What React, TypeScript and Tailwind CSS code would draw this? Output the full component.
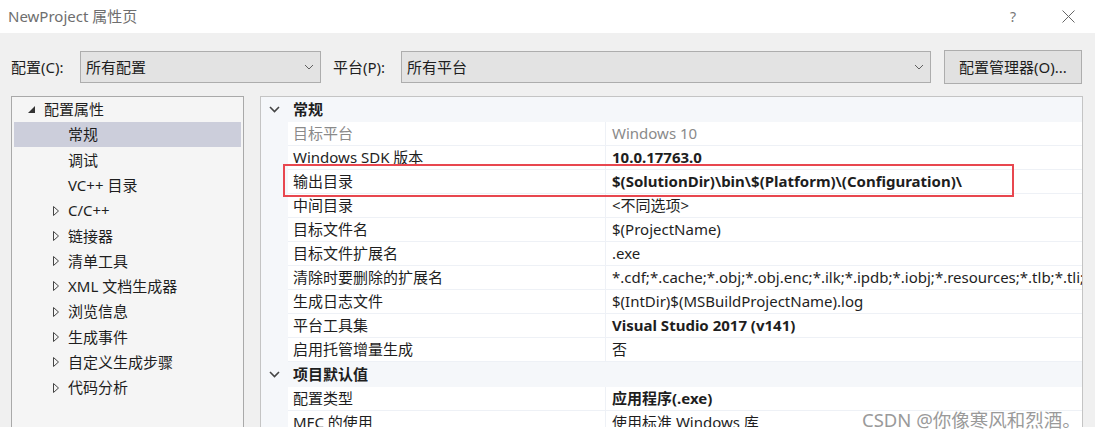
import type { ReactNode } from "react"

type Prop = { name: string; value: string; bold?: boolean; dim?: boolean }

const general: Prop[] = [
  { name: "目标平台", value: "Windows 10", dim: true },
  { name: "Windows SDK 版本", value: "10.0.17763.0", bold: true },
  { name: "输出目录", value: "$(SolutionDir)\\bin\\$(Platform)\\(Configuration)\\", bold: true },
  { name: "中间目录", value: "<不同选项>" },
  { name: "目标文件名", value: "$(ProjectName)" },
  { name: "目标文件扩展名", value: ".exe" },
  {
    name: "清除时要删除的扩展名",
    value:
      "*.cdf;*.cache;*.obj;*.obj.enc;*.ilk;*.ipdb;*.iobj;*.resources;*.tlb;*.tli;*.tlh;*.tmp;*.rsp;*.pgc;*.pgd;*.meta;*.tlog;*.manifest;*.res;*.pch;*.exp",
  },
  { name: "生成日志文件", value: "$(IntDir)$(MSBuildProjectName).log" },
  { name: "平台工具集", value: "Visual Studio 2017 (v141)", bold: true },
  { name: "启用托管增量生成", value: "否" },
]

const defaults: Prop[] = [
  { name: "配置类型", value: "应用程序(.exe)", bold: true },
  { name: "MFC 的使用", value: "使用标准 Windows 库" },
]

const treeItems = [
  { label: "常规", selected: true },
  { label: "调试" },
  { label: "VC++ 目录" },
  { label: "C/C++", expander: true },
  { label: "链接器", expander: true },
  { label: "清单工具", expander: true },
  { label: "XML 文档生成器", expander: true },
  { label: "浏览信息", expander: true },
  { label: "生成事件", expander: true },
  { label: "自定义生成步骤", expander: true },
  { label: "代码分析", expander: true },
]

const Chevron = ({ className }: { className?: string }) => (
  <svg width="10" height="6" viewBox="0 0 10 6" className={className}>
    <path d="M1 1 L5 5 L9 1" fill="none" stroke="currentColor" strokeWidth="1" />
  </svg>
)

const Dropdown = ({ text, width }: { text: string; width: string }) => (
  <div className={`${width} h-[32px] flex items-center justify-between border border-[#adadad] bg-[#e3e3e3] pl-[5px] pr-[6px]`}>
    <span>{text}</span>
    <Chevron className="text-[#606060]" />
  </div>
)

const Category = ({ children }: { children: ReactNode }) => (
  <div className="flex h-[25px] items-center bg-[#f5f7fa]">
    <div className="w-[27px] flex justify-center">
      <svg width="11" height="7" viewBox="0 0 11 7">
        <path d="M1 1 L5.5 5.5 L10 1" fill="none" stroke="#444" strokeWidth="1.6" />
      </svg>
    </div>
    <span className="pl-[5px] font-bold">{children}</span>
  </div>
)

const Row = ({ p }: { p: Prop }) => (
  <div className="flex h-[24px]">
    <div className="w-[27px] shrink-0 bg-[#f5f7fa]" />
    <div className={`w-[317px] shrink-0 flex items-center pl-[5px] bg-white border-b border-[#eef1f6] ${p.dim ? "text-[#8a8a8a]" : ""}`}>
      {p.name}
    </div>
    <div
      className={`flex-1 flex items-center pl-[6px] bg-white border-b border-l border-[#eef1f6] whitespace-nowrap overflow-hidden ${
        p.bold ? "font-bold" : ""
      } ${p.dim ? "text-[#8a8a8a]" : ""}`}
    >
      {p.value}
    </div>
  </div>
)

const App = () => {
  return (
    <div
      className="relative w-[1095px] h-[440px] overflow-hidden bg-white text-[15px] text-[#1e1e1e]"
      style={{ fontFamily: '"Noto Sans", "Noto Sans CJK SC", sans-serif' }}
    >
      {/* title bar */}
      <div className="h-[33px] flex items-center justify-between pl-[8px] pr-[20px]">
        <span className="text-[#6e6e6e]">NewProject 属性页</span>
        <div className="flex items-center gap-[46px] text-[#777]">
          <span className="text-[14px]">?</span>
          <svg width="13" height="13" viewBox="0 0 13 13">
            <path d="M0.5 0.5 L12.5 12.5 M12.5 0.5 L0.5 12.5" stroke="#666" strokeWidth="1" />
          </svg>
        </div>
      </div>

      {/* body */}
      <div className="h-[394px] bg-[#f0f0f0] overflow-hidden pl-[11px] pr-[12px] pt-[17px] flex flex-col">
        <div className="flex items-center h-[34px]">
          <span className="w-[69px]">配置(C):</span>
          <Dropdown text="所有配置" width="w-[241px]" />
          <span className="ml-[12px] w-[68px]">平台(P):</span>
          <Dropdown text="所有平台" width="w-[530px]" />
          <button className="ml-[13px] w-[138px] h-[34px] border border-[#adadad] bg-[#e1e1e1]">配置管理器(O)...</button>
        </div>

        <div className="flex gap-[16px] mt-[12px] h-[400px] shrink-0">
          {/* tree */}
          <div className="w-[233px] shrink-0 border border-[#a9a9a9] bg-[#f5f5f5] px-[2px]">
            <div className="flex items-center h-[25px]">
              <svg width="7" height="7" viewBox="0 0 7 7" className="ml-[14px]">
                <path d="M7 0 L7 7 L0 7 Z" fill="#333" />
              </svg>
              <span className="ml-[9px]">配置属性</span>
            </div>
            {treeItems.map((item) => (
              <div key={item.label} className={`flex items-center h-[25.3px] ${item.selected ? "bg-[#cccedb]" : ""}`}>
                <div className="w-[54px] shrink-0 flex justify-end pr-[9px]">
                  {item.expander && (
                    <svg width="6" height="10" viewBox="0 0 6 10">
                      <path d="M0.5 0.5 L5.5 5 L0.5 9.5 Z" fill="none" stroke="#444" strokeWidth="1" />
                    </svg>
                  )}
                </div>
                <span>{item.label}</span>
              </div>
            ))}
          </div>

          {/* property grid */}
          <div className="flex-1 border border-[#c4c4c4] bg-[#f5f7fa] overflow-hidden">
            <Category>常规</Category>
            {general.map((p) => (
              <Row key={p.name} p={p} />
            ))}
            <Category>项目默认值</Category>
            {defaults.map((p) => (
              <Row key={p.name} p={p} />
            ))}
          </div>
        </div>
      </div>

      {/* highlight box */}
      <div className="absolute left-[283px] top-[164px] w-[731px] h-[33px] border-2 border-[#e8474f]" />

      {/* watermark */}
      <div className="absolute left-[862px] top-[406px] text-[18.5px] text-[#9a9a9a] whitespace-nowrap">CSDN @你像寒风和烈酒。</div>
    </div>
  )
}

export default App
